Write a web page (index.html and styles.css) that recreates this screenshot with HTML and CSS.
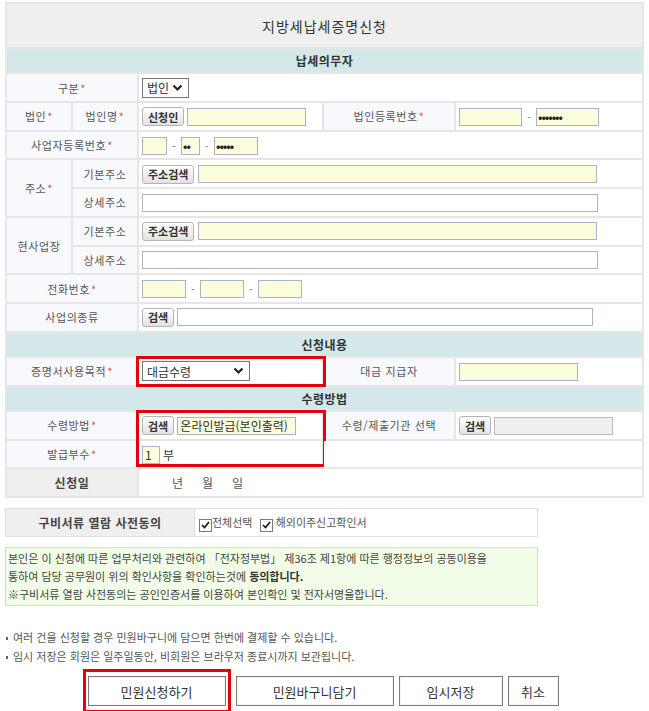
FILE: index.html
```html
<!DOCTYPE html>
<html lang="ko">
<head>
<meta charset="UTF-8">
<meta name="viewport" content="width=device-width, initial-scale=1.0">
<title>지방세납세증명신청</title>
<link rel="stylesheet" href="styles.css">
</head>
<body>
<div class="wrap">
    <table class="form-table">
        <colgroup>
            <col class="c1"><col class="c2"><col class="c3"><col class="c4"><col class="c5">
        </colgroup>
        <tr class="title-row"><th colspan="5">지방세납세증명신청</th></tr>
        <tr class="section"><th colspan="5">납세의무자</th></tr>
        <tr>
            <th colspan="2">구분<em>*</em></th>
            <td colspan="3">
                <span class="select sel-type">법인<svg width="11" height="8" viewBox="0 0 11 8"><polyline points="1.5,1.5 5.5,5.5 9.5,1.5" fill="none" stroke="#222" stroke-width="2.2"/></svg></span>
            </td>
        </tr>
        <tr>
            <th>법인<em>*</em></th>
            <th>법인명<em>*</em></th>
            <td><button class="btn-s">신청인</button> <input class="inp yellow w119" type="text"></td>
            <th>법인등록번호<em>*</em></th>
            <td><input class="inp yellow w63" type="text"><span class="dash">-</span><input class="inp yellow w63 pw" type="password" value="1234567"></td>
        </tr>
        <tr>
            <th colspan="2">사업자등록번호<em>*</em></th>
            <td colspan="3">
                <input class="inp yellow w25" type="text"><span class="dash">-</span><input class="inp yellow w19 pw" type="password" value="12"><span class="dash">-</span><input class="inp yellow w44 pw" type="password" value="12345">
            </td>
        </tr>
        <tr>
            <th rowspan="2">주소<em>*</em></th>
            <th>기본주소</th>
            <td colspan="3"><button class="btn-s">주소검색</button> <input class="inp yellow w399" type="text"></td>
        </tr>
        <tr>
            <th>상세주소</th>
            <td colspan="3"><input class="inp w456" type="text"></td>
        </tr>
        <tr>
            <th rowspan="2">현사업장</th>
            <th>기본주소</th>
            <td colspan="3"><button class="btn-s">주소검색</button> <input class="inp yellow w399" type="text"></td>
        </tr>
        <tr>
            <th>상세주소</th>
            <td colspan="3"><input class="inp w456" type="text"></td>
        </tr>
        <tr>
            <th colspan="2">전화번호<em>*</em></th>
            <td colspan="3">
                <input class="inp yellow w44" type="text"><span class="dash">-</span><input class="inp yellow w44" type="text"><span class="dash">-</span><input class="inp yellow w44" type="text">
            </td>
        </tr>
        <tr>
            <th colspan="2">사업의종류</th>
            <td colspan="3"><button class="btn-s">검색</button> <input class="inp w416" type="text"></td>
        </tr>
        <tr class="section"><th colspan="5">신청내용</th></tr>
        <tr>
            <th colspan="2">증명서사용목적<em>*</em></th>
            <td class="mark">
                <span class="select sel-purpose">대금수령<svg width="11" height="8" viewBox="0 0 11 8"><polyline points="1.5,1.5 5.5,5.5 9.5,1.5" fill="none" stroke="#222" stroke-width="2.2"/></svg></span>
            </td>
            <th>대금 지급자</th>
            <td><input class="inp yellow w119" type="text"></td>
        </tr>
        <tr class="section"><th colspan="5">수령방법</th></tr>
        <tr>
            <th colspan="2">수령방법<em>*</em></th>
            <td class="mark-top"><button class="btn-s">검색</button> <input class="inp yellow w119 filled" type="text" value="온라인발급(본인출력)"></td>
            <th>수령/제출기관 선택</th>
            <td><button class="btn-s">검색</button> <input class="inp grey w119" type="text" disabled></td>
        </tr>
        <tr>
            <th colspan="2">발급부수<em>*</em></th>
            <td class="mark-bottom"><input class="inp yellow w18 filled" type="text" value="1"><span class="unit">부</span></td>
            <td colspan="2" class="blank"></td>
        </tr>
        <tr>
            <th colspan="2" class="gray">신청일</th>
            <td colspan="3" class="date"><span>년</span><span>월</span><span>일</span></td>
        </tr>
    </table>

    <table class="agree">
        <tr>
            <th>구비서류 열람 사전동의</th>
            <td>
                <span class="chk"><svg width="9" height="8" viewBox="0 0 9 8"><polyline points="1,4 3.5,6.5 8,1" fill="none" stroke="#111" stroke-width="1.6"/></svg></span>전체선택
                <span class="chk second"><svg width="9" height="8" viewBox="0 0 9 8"><polyline points="1,4 3.5,6.5 8,1" fill="none" stroke="#111" stroke-width="1.6"/></svg></span> 해외이주신고확인서
            </td>
        </tr>
    </table>

    <div class="notice">
        본인은 이 신청에 따른 업무처리와 관련하여 「전자정부법」 제36조 제1항에 따른 행정정보의 공동이용을<br>
        통하여 담당 공무원이 위의 확인사항을 확인하는것에 <strong>동의합니다.</strong><br>
        ※구비서류 열람 사전동의는 공인인증서를 이용하여 본인확인 및 전자서명을합니다.
    </div>

    <ul class="info">
        <li>여러 건을 신청할 경우 민원바구니에 담으면 한번에 결제할 수 있습니다.</li>
        <li>임시 저장은 회원은 일주일동안, 비회원은 브라우저 종료시까지 보관됩니다.</li>
    </ul>

    <div class="actions">
        <span class="mark-btn"><button class="btn w138">민원신청하기</button></span>
        <button class="btn w158">민원바구니담기</button>
        <button class="btn w104">임시저장</button>
        <button class="btn w51">취소</button>
    </div>
</div>
</body>
</html>
```

FILE: styles.css
```css
body {
    margin: 0;
    padding: 0;
    background-color: #fff;
    font-family: "Noto Sans CJK KR", "Noto Sans", sans-serif;
    font-size: 11px;
    color: #555;
}
.wrap {
    padding: 2px 5px 0 5px;
    width: 637px;
}
.form-table {
    width: 637px;
    border-collapse: collapse;
    table-layout: fixed;
}
.c1, .c2 { width: 66px; }
.c3 { width: 185px; }
.c4 { width: 132px; }
.c5 { width: 188px; }
.form-table th,
.form-table td {
    border: 2px solid #e6e6e6;
    height: 26.7px;
    padding: 0 3px;
    font-size: 11px;
    white-space: nowrap;
}
.form-table th {
    font-weight: normal;
    background-color: #f8f9fc;
    color: #555;
    letter-spacing: 0.6px;
}
.form-table td {
    position: relative;
    background-color: #fff;
}
.form-table em {
    font-style: normal;
    color: #e2572f;
    margin-left: 1px;
}
.form-table .title-row th {
    height: 43px;
    background-color: #efefef;
    font-size: 14px;
    color: #333;
    letter-spacing: 1px;
}
.form-table .section th {
    height: 23.4px;
    background-color: #d4e8ea;
    font-weight: bold;
    font-size: 12px;
    color: #333;
    letter-spacing: 0.5px;
}
.form-table th.gray {
    background-color: #efefef;
    font-weight: bold;
    font-size: 12px;
    color: #444;
}
.inp {
    box-sizing: border-box;
    height: 18px;
    border: 1px solid #a9b5c6;
    background-color: #fff;
    padding: 0 2px;
    margin: 0;
    font-family: inherit;
    font-size: 11px;
    color: #333;
    vertical-align: middle;
}
.inp.yellow { background-color: #fbfddd; }
.inp.grey { background-color: #efefef; border-color: #b4bcc6; }
.inp.filled { font-size: 12px; color: #333; }
.inp.pw { font-size: 13px; letter-spacing: -1px; color: #222; padding: 0 1px; }
.w18 { width: 18px; }
.w19 { width: 19px; }
.w25 { width: 25px; }
.w44 { width: 44px; }
.w63 { width: 63px; }
.w119 { width: 119px; }
.w399 { width: 399px; }
.w416 { width: 416px; }
.w456 { width: 456px; }
.dash {
    display: inline-block;
    width: 14px;
    text-align: center;
    color: #777;
    vertical-align: middle;
}
.unit {
    margin-left: 3px;
    font-size: 12px;
    color: #333;
    vertical-align: middle;
}
.btn-s {
    box-sizing: border-box;
    height: 19px;
    padding: 0 5px;
    margin: 0;
    border: 1px solid #b4b4b4;
    border-radius: 3px;
    background: linear-gradient(#ffffff, #e2e2e2);
    font-family: inherit;
    font-size: 11px;
    font-weight: bold;
    color: #333;
    vertical-align: middle;
}
.select {
    box-sizing: border-box;
    display: inline-flex;
    align-items: center;
    justify-content: space-between;
    height: 20px;
    padding: 0 5px 0 4px;
    border: 1px solid #767676;
    background-color: #fff;
    font-size: 12px;
    color: #333;
    vertical-align: middle;
}
.sel-type { width: 47px; }
.sel-purpose { width: 108px; }
.mark::after,
.mark-top::after,
.mark-bottom::after {
    content: "";
    position: absolute;
    left: -3px;
    right: -4px;
    border: 3px solid #e3000f;
    pointer-events: none;
}
.mark::after { top: -2px; bottom: -2px; }
.mark-top::after { top: -2px; bottom: -2px; border-bottom: 0; }
.mark-bottom::after { top: -2px; bottom: 0; border-top: 0; }
.form-table td.blank { border-left: 0; }
.date span {
    display: inline-block;
    margin-left: 19px;
    font-size: 12px;
}
.date span:first-child { margin-left: 30px; }

.agree {
    width: 533px;
    margin-top: 10px;
    border-collapse: collapse;
    table-layout: fixed;
}
.agree th,
.agree td {
    height: 27px;
    border: 1px solid #dedede;
    padding: 0 4px;
    font-size: 11px;
}
.agree th {
    width: 180px;
    background-color: #efefef;
    font-size: 12px;
    color: #444;
    letter-spacing: 0.5px;
}
.chk {
    box-sizing: border-box;
    display: inline-flex;
    align-items: center;
    justify-content: center;
    width: 13px;
    height: 13px;
    border: 1px solid #7a7a7a;
    background-color: #fff;
    vertical-align: middle;
    margin-top: 3px;
}
.chk.second { margin-left: 4px; }
.notice {
    box-sizing: border-box;
    width: 533px;
    margin-top: 10px;
    padding: 1px 1px 2px 2px;
    border: 1px solid #cfe2c0;
    background-color: #f1fde6;
    line-height: 18px;
    color: #444;
    white-space: nowrap;
}
.notice strong { color: #333; }
.info {
    list-style: none;
    margin: 22px 0 0 0;
    padding: 0;
    line-height: 19px;
    color: #555;
}
.info li::before {
    content: "";
    display: inline-block;
    width: 2px;
    height: 3px;
    margin: 0 5px 2px 1px;
    background-color: #666;
    vertical-align: middle;
}
.actions {
    display: flex;
    align-items: center;
    justify-content: center;
    gap: 5px;
    margin-top: 3px;
    padding-right: 6px;
}
.mark-btn {
    display: inline-block;
    padding: 4px 2px;
    border: 3px solid #e3000f;
}
.btn {
    display: block;
    box-sizing: border-box;
    height: 30px;
    margin: 0;
    border: 1px solid #7c7c7c;
    background-color: #fff;
    box-shadow: inset 0 0 0 1px #f4f4f4;
    font-family: inherit;
    font-size: 13px;
    color: #333;
}
.w138 { width: 138px; }
.w158 { width: 158px; }
.w104 { width: 104px; }
.w51 { width: 51px; }
```
